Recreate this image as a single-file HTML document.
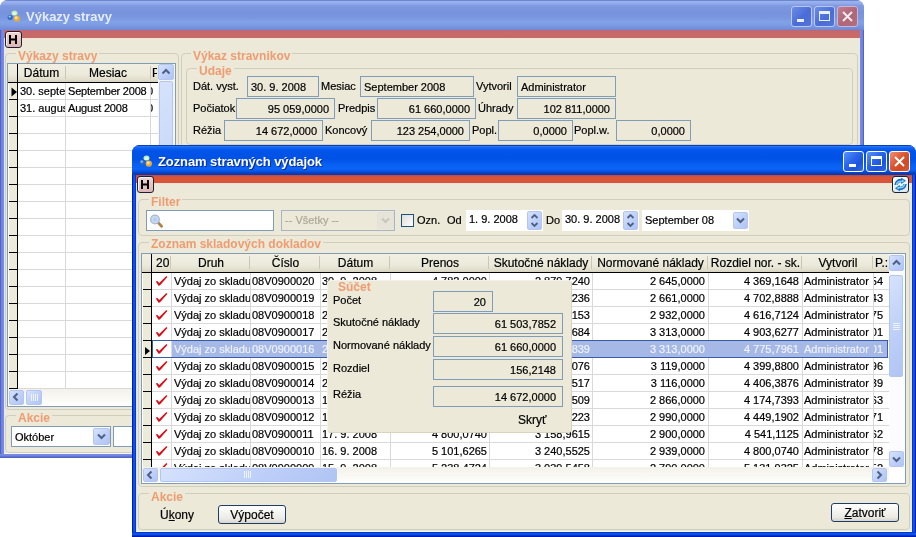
<!DOCTYPE html>
<html><head><meta charset="utf-8">
<style>
*{box-sizing:border-box;margin:0;padding:0}
html,body{width:916px;height:537px;overflow:hidden;background:#fff;font-family:"Liberation Sans",sans-serif;font-size:11px;color:#000}
.a{position:absolute}
.t{font-size:11px;line-height:11px;white-space:nowrap;-webkit-text-stroke:0.2px currentColor}
.gl{font-size:12px;line-height:12px;font-weight:bold;white-space:nowrap;background:#ECE9D8}
.tt{font-size:13px;line-height:13px;font-weight:bold;white-space:nowrap}
.hb{position:absolute;width:17px;height:17px;border:1px solid #2E3040;border-radius:3px;background:linear-gradient(#F0D4D0,#DDB4B0);font-weight:bold;font-size:12px;line-height:15px;text-align:center;color:#000}
.sbb{position:absolute;border:1px solid #B4C6F0;border-radius:2px;background:linear-gradient(135deg,#D6E2FC,#BCCEF8 60%,#B0C4F4)}
.hdr{background:linear-gradient(#F1EFE2 0,#ECEADB 60%,#E2DFCE 85%,#D6D2C2 100%)}
</style></head><body><div style="position:absolute;left:0;top:0;width:916px;height:537px;will-change:transform;overflow:hidden">

<div class="a" style="left:0px;top:0px;width:864px;height:458px;background:#7A8FDB;border-radius:8px 8px 0 0;"></div>
<div class="a" style="left:0px;top:0px;width:864px;height:30px;border-radius:8px 8px 0 0;background:linear-gradient(#6E86D0 0,#6E86D0 1px,#9CB5EE 1px,#94AEEC 3px,#7E98E0 6px,#7892DC 12px,#7A97DF 18px,#80A2E8 22px,#7C9CE4 25px,#7590DA 28px,#6E88D4 30px);"></div>
<svg class="a" style="left:7px;top:10px" width="15" height="13" viewBox="0 0 15 13"><ellipse cx="7.5" cy="3" rx="3" ry="2.6" fill="#B8ECB0"/><ellipse cx="7.5" cy="3.5" rx="2" ry="1.6" fill="#E0FADC"/><circle cx="3.2" cy="7.3" r="2.6" fill="#2F6CC0"/><circle cx="2.8" cy="6.6" r="1.2" fill="#8CC0F0"/><circle cx="9.8" cy="8.6" r="3.2" fill="#E8A838"/><circle cx="9.2" cy="7.8" r="1.6" fill="#FAE0A0"/></svg>
<div class="a tt" style="left:26px;top:10px;color:#E4ECFC">Výkazy stravy</div>
<div class="a" style="left:791px;top:6px;width:21px;height:21px;border:1px solid #B9C8F2;border-radius:3px;background:linear-gradient(135deg,#6C8DE6,#4A6CD8 55%,#5574DA);"></div>
<div class="a" style="left:814px;top:6px;width:21px;height:21px;border:1px solid #B9C8F2;border-radius:3px;background:linear-gradient(135deg,#6C8DE6,#4A6CD8 55%,#5574DA);"></div>
<div class="a" style="left:837px;top:6px;width:21px;height:21px;border:1px solid #C8B6D8;border-radius:3px;background:linear-gradient(135deg,#C27D90,#B06676 55%,#B46E80);"></div>
<div class="a" style="left:797px;top:19px;width:7px;height:3px;background:#E8EEFC;"></div>
<div class="a" style="left:819px;top:11px;width:11px;height:10px;border:1px solid #E8EEFC;border-top-width:3px;"></div>
<svg class="a" style="left:841px;top:10px" width="13" height="13" viewBox="0 0 13 13"><path d="M2 2 L11 11 M11 2 L2 11" stroke="#F4ECF2" stroke-width="2"/></svg>
<div class="a" style="left:4px;top:30px;width:856px;height:424px;background:#ECE9D8;"></div>
<div class="a" style="left:0px;top:30px;width:4px;height:428px;background:linear-gradient(90deg,#5363C8 0,#5363C8 1px,#6C80DE 1px,#7488E2 3px,#7D90E6 4px);"></div>
<div class="a" style="left:860px;top:30px;width:4px;height:428px;background:linear-gradient(90deg,#7D90E6 0,#7488E2 1px,#6C80DE 3px,#5363C8 3px,#5363C8 4px);"></div>
<div class="a" style="left:0px;top:454px;width:864px;height:4px;background:linear-gradient(#7D90E6 0,#7488E2 1px,#6C80DE 2px,#5363C8 3px,#5363C8 4px);"></div>
<div class="a" style="left:4px;top:38px;width:1px;height:416px;background:#E2E6F4;"></div>
<div class="a" style="left:4px;top:453px;width:856px;height:1px;background:#F4F4F8;"></div>
<div class="a" style="left:4px;top:30px;width:856px;height:8px;background:linear-gradient(#B9667A 0,#C86A68 2px,#C66A66 100%);"></div>
<div class="a" style="left:4px;top:38px;width:856px;height:1px;background:#F2E2DA;"></div>
<div class="a" style="left:5px;top:31px;width:17px;height:17px;border:1px solid #1E2030;box-shadow:inset 1px 1px 0 #F8F0F0;border-radius:3px;background:linear-gradient(#EED6D4,#DDB6B4)"></div>
<svg class="a" style="left:5px;top:31px" width="17" height="17" viewBox="0 0 17 17"><path d="M4 4h2v3.5h4V4h2v9h-2V9.5H6V13H4z" fill="#000"/></svg>
<div class="a" style="left:5px;top:53px;width:174px;height:357px;border:1px solid #D0CFBF;border-radius:4px;"></div>
<div class="a gl" style="left:16px;top:50px;padding:0 2px;color:#EE9C72">Výkazy stravy</div>
<div class="a" style="left:7px;top:63px;width:169px;height:344px;border:1px solid #7F9DB9;background:#fff;"></div>
<div class="a" style="left:8px;top:64px;width:150px;height:17px;"></div>
<div class="a hdr" style="left:8px;top:64px;width:150px;height:18px"></div>
<div class="a" style="left:8px;top:82px;width:150px;height:1px;background:#000;"></div>
<div class="a" style="left:9px;top:83px;width:8px;height:306px;background:#ECEBDA;"></div>
<div class="a" style="left:17px;top:64px;width:1px;height:325px;background:#000;"></div>
<div class="a" style="left:65px;top:66px;width:1px;height:13px;background:#CAC7B5;"></div>
<div class="a" style="left:65px;top:83px;width:1px;height:306px;background:#D9D9D9;"></div>
<div class="a" style="left:150px;top:66px;width:1px;height:13px;background:#CAC7B5;"></div>
<div class="a" style="left:150px;top:83px;width:1px;height:306px;background:#D9D9D9;"></div>
<div class="a t" style="left:18px;width:47px;top:67px;text-align:center;font-size:12px;line-height:12px">Dátum</div>
<div class="a t" style="left:66px;width:84px;top:67px;text-align:center;font-size:12px;line-height:12px">Mesiac</div>
<div class="a t" style="left:152px;top:67px;width:5px;overflow:hidden;text-align:left;font-size:12px;line-height:12px">P</div>
<div class="a" style="left:18px;top:99px;width:140px;height:1px;background:#D9D9D9;"></div>
<div class="a" style="left:9px;top:99px;width:9px;height:1px;background:#000;"></div>
<div class="a" style="left:18px;top:116px;width:140px;height:1px;background:#D9D9D9;"></div>
<div class="a" style="left:9px;top:116px;width:9px;height:1px;background:#000;"></div>
<div class="a" style="left:18px;top:133px;width:140px;height:1px;background:#D9D9D9;"></div>
<div class="a" style="left:9px;top:133px;width:9px;height:1px;background:#000;"></div>
<div class="a" style="left:18px;top:150px;width:140px;height:1px;background:#D9D9D9;"></div>
<div class="a" style="left:9px;top:150px;width:9px;height:1px;background:#000;"></div>
<div class="a" style="left:18px;top:167px;width:140px;height:1px;background:#D9D9D9;"></div>
<div class="a" style="left:9px;top:167px;width:9px;height:1px;background:#000;"></div>
<div class="a" style="left:18px;top:184px;width:140px;height:1px;background:#D9D9D9;"></div>
<div class="a" style="left:9px;top:184px;width:9px;height:1px;background:#000;"></div>
<div class="a" style="left:18px;top:201px;width:140px;height:1px;background:#D9D9D9;"></div>
<div class="a" style="left:9px;top:201px;width:9px;height:1px;background:#000;"></div>
<div class="a" style="left:18px;top:218px;width:140px;height:1px;background:#D9D9D9;"></div>
<div class="a" style="left:9px;top:218px;width:9px;height:1px;background:#000;"></div>
<div class="a" style="left:18px;top:235px;width:140px;height:1px;background:#D9D9D9;"></div>
<div class="a" style="left:9px;top:235px;width:9px;height:1px;background:#000;"></div>
<div class="a" style="left:18px;top:252px;width:140px;height:1px;background:#D9D9D9;"></div>
<div class="a" style="left:9px;top:252px;width:9px;height:1px;background:#000;"></div>
<div class="a" style="left:18px;top:269px;width:140px;height:1px;background:#D9D9D9;"></div>
<div class="a" style="left:9px;top:269px;width:9px;height:1px;background:#000;"></div>
<div class="a" style="left:18px;top:286px;width:140px;height:1px;background:#D9D9D9;"></div>
<div class="a" style="left:9px;top:286px;width:9px;height:1px;background:#000;"></div>
<div class="a" style="left:18px;top:303px;width:140px;height:1px;background:#D9D9D9;"></div>
<div class="a" style="left:9px;top:303px;width:9px;height:1px;background:#000;"></div>
<div class="a" style="left:18px;top:320px;width:140px;height:1px;background:#D9D9D9;"></div>
<div class="a" style="left:9px;top:320px;width:9px;height:1px;background:#000;"></div>
<div class="a" style="left:18px;top:337px;width:140px;height:1px;background:#D9D9D9;"></div>
<div class="a" style="left:9px;top:337px;width:9px;height:1px;background:#000;"></div>
<div class="a" style="left:18px;top:354px;width:140px;height:1px;background:#D9D9D9;"></div>
<div class="a" style="left:9px;top:354px;width:9px;height:1px;background:#000;"></div>
<div class="a" style="left:18px;top:371px;width:140px;height:1px;background:#D9D9D9;"></div>
<div class="a" style="left:9px;top:371px;width:9px;height:1px;background:#000;"></div>
<div class="a" style="left:18px;top:388px;width:140px;height:1px;background:#D9D9D9;"></div>
<div class="a" style="left:9px;top:388px;width:9px;height:1px;background:#000;"></div>
<div class="a t" style="left:20px;top:86px;width:45px;overflow:hidden;text-align:left;">30. septembra 2008</div>
<div class="a t" style="left:68px;top:86px;width:82px;overflow:hidden;text-align:left;letter-spacing:-0.2px">September 2008</div>
<div class="a t" style="left:151px;top:86px;width:7px;overflow:hidden"><span style="margin-left:-4px">0</span></div>
<div class="a t" style="left:20px;top:103px;width:45px;overflow:hidden;text-align:left;">31. augusta 2008</div>
<div class="a t" style="left:68px;top:103px;width:82px;overflow:hidden;text-align:left;letter-spacing:-0.2px">August 2008</div>
<div class="a t" style="left:151px;top:103px;width:7px;overflow:hidden"><span style="margin-left:-4px">0</span></div>
<svg class="a" style="left:11px;top:87px" width="6" height="10" viewBox="0 0 6 10"><path d="M0.5 0.5 L6 5 L0.5 9.5 Z" fill="#000"/></svg>
<div class="a" style="left:158px;top:64px;width:17px;height:325px;background:#F6F5EE;"></div>
<div class="sbb" style="left:158px;top:64px;width:16px;height:16px"></div>
<svg class="a" style="left:161px;top:67px" width="10" height="10" viewBox="0 0 10 10"><path d="M1.5 6.5 L5 3 L8.5 6.5" stroke="#4D6185" stroke-width="2" fill="none"/></svg>
<div class="sbb" style="left:159px;top:81px;width:14px;height:300px"></div>
<div class="a" style="left:8px;top:389px;width:150px;height:16px;background:linear-gradient(#F3F1EA,#FEFEFB);"></div>
<div class="sbb" style="left:9px;top:390px;width:15px;height:15px"></div>
<svg class="a" style="left:11px;top:392px" width="10" height="10" viewBox="0 0 10 10"><path d="M6.5 1.5 L3 5 L6.5 8.5" stroke="#4D6185" stroke-width="2" fill="none"/></svg>
<div class="sbb" style="left:26px;top:390px;width:16px;height:15px"></div>
<div class="a" style="left:31px;top:394px;width:1px;height:7px;background:#EEF4FE;"></div>
<div class="a" style="left:33px;top:394px;width:1px;height:7px;background:#EEF4FE;"></div>
<div class="a" style="left:35px;top:394px;width:1px;height:7px;background:#EEF4FE;"></div>
<div class="a" style="left:37px;top:394px;width:1px;height:7px;background:#EEF4FE;"></div>
<div class="a" style="left:5px;top:415px;width:174px;height:38px;border:1px solid #D0CFBF;border-radius:4px;"></div>
<div class="a gl" style="left:16px;top:412px;padding:0 2px;color:#EE9C72">Akcie</div>
<div class="a" style="left:11px;top:426px;width:100px;height:21px;border:1px solid #7F9DB9;background:#fff;"></div>
<div class="a t" style="left:15px;top:432px;">Október</div>
<div class="sbb" style="left:93px;top:428px;width:17px;height:17px"></div>
<svg class="a" style="left:96px;top:431px" width="11" height="11" viewBox="0 0 11 11"><path d="M2 3.5 L5.5 7 L9 3.5" stroke="#4D6185" stroke-width="2" fill="none"/></svg>
<div class="a" style="left:113px;top:426px;width:30px;height:21px;border:1px solid #7F9DB9;background:#fff;"></div>
<div class="a" style="left:181px;top:53px;width:677px;height:96px;border:1px solid #D0CFBF;border-radius:4px;"></div>
<div class="a gl" style="left:191px;top:50px;padding:0 2px;color:#EE9C72">Výkaz stravnikov</div>
<div class="a" style="left:186px;top:68px;width:667px;height:77px;border:1px solid #D0CFBF;border-radius:4px;"></div>
<div class="a gl" style="left:197px;top:65px;padding:0 2px;color:#EE9C72">Udaje</div>
<div class="a t" style="left:193px;top:81px;">Dát. vyst.</div>
<div class="a" style="left:247px;top:76px;width:72px;height:21px;border:1px solid #7F9DB9;background:#ECE9D8;"></div>
<div class="a t" style="left:251px;top:82px;">30. 9. 2008</div>
<div class="a t" style="left:321px;top:81px;">Mesiac</div>
<div class="a" style="left:360px;top:76px;width:114px;height:21px;border:1px solid #7F9DB9;background:#ECE9D8;"></div>
<div class="a t" style="left:364px;top:82px;">September 2008</div>
<div class="a t" style="left:476px;top:81px;">Vytvoril</div>
<div class="a" style="left:517px;top:76px;width:99px;height:21px;border:1px solid #7F9DB9;background:#ECE9D8;"></div>
<div class="a t" style="left:521px;top:82px;">Administrator</div>
<div class="a t" style="left:193px;top:103px;">Počiatok</div>
<div class="a" style="left:236px;top:98px;width:99px;height:21px;border:1px solid #7F9DB9;background:#ECE9D8;"></div>
<div class="a t" style="right:587px;top:104px;text-align:right;">95 059,0000</div>
<div class="a t" style="left:338px;top:103px;">Predpis</div>
<div class="a" style="left:377px;top:98px;width:99px;height:21px;border:1px solid #7F9DB9;background:#ECE9D8;"></div>
<div class="a t" style="right:446px;top:104px;text-align:right;">61 660,0000</div>
<div class="a t" style="left:478px;top:103px;">Úhrady</div>
<div class="a" style="left:517px;top:98px;width:99px;height:21px;border:1px solid #7F9DB9;background:#ECE9D8;"></div>
<div class="a t" style="right:306px;top:104px;text-align:right;">102 811,0000</div>
<div class="a t" style="left:193px;top:125px;">Réžia</div>
<div class="a" style="left:224px;top:120px;width:99px;height:21px;border:1px solid #7F9DB9;background:#ECE9D8;"></div>
<div class="a t" style="right:599px;top:126px;text-align:right;">14 672,0000</div>
<div class="a t" style="left:325px;top:125px;">Koncový</div>
<div class="a" style="left:371px;top:120px;width:99px;height:21px;border:1px solid #7F9DB9;background:#ECE9D8;"></div>
<div class="a t" style="right:452px;top:126px;text-align:right;">123 254,0000</div>
<div class="a t" style="left:472px;top:125px;">Popl.</div>
<div class="a" style="left:498px;top:120px;width:75px;height:21px;border:1px solid #7F9DB9;background:#ECE9D8;"></div>
<div class="a t" style="right:349px;top:126px;text-align:right;">0,0000</div>
<div class="a t" style="left:574px;top:125px;">Popl.w.</div>
<div class="a" style="left:616px;top:120px;width:75px;height:21px;border:1px solid #7F9DB9;background:#ECE9D8;"></div>
<div class="a t" style="right:231px;top:126px;text-align:right;">0,0000</div>
<div class="a" style="left:132px;top:145px;width:784px;height:392px;background:#0831D9;border-radius:8px 8px 0 0;"></div>
<div class="a" style="left:132px;top:145px;width:784px;height:30px;border-radius:8px 8px 0 0;background:linear-gradient(#0A3FB8 0,#0A3FB8 1px,#2E7BFA 1px,#0E62F2 3px,#0254E8 6px,#0052E6 14px,#0860F2 20px,#0A64F6 24px,#0556E8 26px,#0640C0 28px,#0A38A8 30px);"></div>
<svg class="a" style="left:139px;top:155px" width="15" height="13" viewBox="0 0 15 13"><ellipse cx="7.5" cy="3" rx="3" ry="2.6" fill="#B8ECB0"/><ellipse cx="7.5" cy="3.5" rx="2" ry="1.6" fill="#E0FADC"/><circle cx="3.2" cy="7.3" r="2.6" fill="#2F6CC0"/><circle cx="2.8" cy="6.6" r="1.2" fill="#8CC0F0"/><circle cx="9.8" cy="8.6" r="3.2" fill="#E8A838"/><circle cx="9.2" cy="7.8" r="1.6" fill="#FAE0A0"/></svg>
<div class="a tt" style="left:158px;top:155px;color:#fff;text-shadow:1px 1px 0 #0A2A9A;letter-spacing:-0.09px">Zoznam stravných výdajok</div>
<div class="a" style="left:843px;top:151px;width:21px;height:21px;border:1px solid #FFFFFF;border-radius:3px;background:linear-gradient(135deg,#5A92FA,#2863E8 45%,#1B55DE 70%,#2F6AE8);"></div>
<div class="a" style="left:866px;top:151px;width:21px;height:21px;border:1px solid #FFFFFF;border-radius:3px;background:linear-gradient(135deg,#5A92FA,#2863E8 45%,#1B55DE 70%,#2F6AE8);"></div>
<div class="a" style="left:889px;top:151px;width:21px;height:21px;border:1px solid #FFFFFF;border-radius:3px;background:linear-gradient(135deg,#F09070,#DD5530 45%,#D04A25 70%,#D85A38);"></div>
<div class="a" style="left:849px;top:164px;width:7px;height:3px;background:#FFFFFF;"></div>
<div class="a" style="left:871px;top:156px;width:11px;height:10px;border:1px solid #FFFFFF;border-top-width:3px;"></div>
<svg class="a" style="left:893px;top:155px" width="13" height="13" viewBox="0 0 13 13"><path d="M2 2 L11 11 M11 2 L2 11" stroke="#FFFFFF" stroke-width="2"/></svg>
<div class="a" style="left:136px;top:175px;width:776px;height:357px;background:#ECE9D8;"></div>
<div class="a" style="left:132px;top:175px;width:4px;height:362px;background:linear-gradient(90deg,#001CAC 0,#001CAC 1px,#0A4CE8 1px,#0B58F2 3px,#0538CC 3px,#0538CC 4px);"></div>
<div class="a" style="left:912px;top:175px;width:4px;height:362px;background:linear-gradient(90deg,#0538CC 0,#0538CC 1px,#0B58F2 1px,#0A4CE8 3px,#001CAC 3px,#001CAC 4px);"></div>
<div class="a" style="left:132px;top:532px;width:784px;height:5px;background:linear-gradient(#0538CC 0,#0538CC 1px,#0B58F2 1px,#0A4CE8 3px,#001CAC 4px,#001CAC 5px);"></div>
<div class="a" style="left:136px;top:183px;width:1px;height:349px;background:#D8E2F6;"></div>
<div class="a" style="left:136px;top:531px;width:776px;height:1px;background:#F4F6FA;"></div>
<div class="a" style="left:136px;top:175px;width:776px;height:8px;background:linear-gradient(#B84A48 0,#D9553A 2px,#D9553A 100%);"></div>
<div class="a" style="left:136px;top:183px;width:776px;height:1px;background:#F4E0D4;"></div>
<div class="a" style="left:137px;top:176px;width:17px;height:17px;border:1px solid #1E2030;box-shadow:inset 1px 1px 0 #F8F0F0;border-radius:3px;background:linear-gradient(#EED6D4,#DDB6B4)"></div>
<svg class="a" style="left:137px;top:176px" width="17" height="17" viewBox="0 0 17 17"><path d="M4 4h2v3.5h4V4h2v9h-2V9.5H6V13H4z" fill="#000"/></svg>
<div class="a" style="left:892px;top:176px;width:17px;height:17px;border:1px solid #1A2238;border-radius:3px;background:linear-gradient(#F4FAFE,#DCEAF4);box-shadow:inset 1px 1px 0 #fff"></div>
<svg class="a" style="left:892px;top:176px" width="17" height="17" viewBox="0 0 17 17"><path d="M4 9 C4.2 6 6.5 4.3 10 4.6" stroke="#1E6AB8" stroke-width="3.4" fill="none"/><path d="M9.2 1.8 L14 4.8 L9.2 8 Z" fill="#1E6AB8"/><path d="M13 8 C12.8 11 10.5 12.7 7 12.4" stroke="#1E6AB8" stroke-width="3.4" fill="none"/><path d="M7.8 9 L3 12.2 L7.8 15.2 Z" fill="#1E6AB8"/><path d="M4.5 9 C4.7 6.5 6.8 5 10 5.2" stroke="#7AD0F6" stroke-width="1.6" fill="none"/><path d="M10 3.6 L12.6 4.9 L10 6.5 Z" fill="#7AD0F6"/><path d="M12.5 8 C12.3 10.5 10.2 12 7 11.8" stroke="#7AD0F6" stroke-width="1.6" fill="none"/><path d="M7 10.5 L4.4 12.1 L7 13.5 Z" fill="#7AD0F6"/></svg>
<div class="a" style="left:138px;top:199px;width:772px;height:37px;border:1px solid #D0CFBF;border-radius:4px;"></div>
<div class="a gl" style="left:149px;top:196px;padding:0 2px;color:#EE9C72">Filter</div>
<div class="a" style="left:146px;top:210px;width:128px;height:21px;border:1px solid #7F9DB9;background:#fff;"></div>
<svg class="a" style="left:149px;top:213px" width="16" height="16" viewBox="0 0 16 16"><path d="M9.2 9.6 L12.6 13.2" stroke="#B0804A" stroke-width="2.8" stroke-linecap="round"/><circle cx="6" cy="6.5" r="4.3" fill="#C8DAF2" stroke="#A4B6D2" stroke-width="1.3"/><circle cx="6" cy="6.5" r="2" fill="#B8CCEA"/></svg>
<div class="a" style="left:281px;top:210px;width:114px;height:21px;border:1px solid #C9C7BA;background:#ECE9D8;"></div>
<div class="a" style="left:281px;top:210px;width:114px;height:21px;border:1px solid #A8B4C4;"></div>
<div class="a t" style="left:285px;top:215px;color:#ACA899">-- Všetky --</div>
<div class="a" style="left:377px;top:212px;width:17px;height:17px;border:1px solid #E4E2D8;border-radius:2px;background:#E6E4D8;"></div>
<svg class="a" style="left:380px;top:215px" width="11" height="11" viewBox="0 0 11 11"><path d="M2 3.5 L5.5 7 L9 3.5" stroke="#C8C6BA" stroke-width="2" fill="none"/></svg>
<div class="a" style="left:401px;top:214px;width:13px;height:13px;border:1px solid #1C5180;background:linear-gradient(135deg,#DCDCD7,#FFFFFF);"></div>
<div class="a t" style="left:417px;top:215px;">Ozn.</div>
<div class="a t" style="left:447px;top:215px;">Od</div>
<div class="a" style="left:466px;top:210px;width:77px;height:21px;background:#fff;"></div>
<div class="a t" style="left:469px;top:214px;">1. 9. 2008</div>
<div class="sbb" style="left:527px;top:211px;width:15px;height:19px"></div>
<svg class="a" style="left:529px;top:212px" width="11" height="17" viewBox="0 0 11 17"><path d="M2.5 6 L5.5 3 L8.5 6 M2.5 11 L5.5 14 L8.5 11" stroke="#4D6185" stroke-width="1.8" fill="none"/></svg>
<div class="a t" style="left:546px;top:215px;">Do</div>
<div class="a" style="left:562px;top:210px;width:77px;height:21px;background:#fff;"></div>
<div class="a t" style="left:565px;top:214px;">30. 9. 2008</div>
<div class="sbb" style="left:623px;top:211px;width:15px;height:19px"></div>
<svg class="a" style="left:625px;top:212px" width="11" height="17" viewBox="0 0 11 17"><path d="M2.5 6 L5.5 3 L8.5 6 M2.5 11 L5.5 14 L8.5 11" stroke="#4D6185" stroke-width="1.8" fill="none"/></svg>
<div class="a" style="left:642px;top:210px;width:107px;height:21px;background:#fff;"></div>
<div class="a t" style="left:645px;top:215px;">September 08</div>
<div class="sbb" style="left:733px;top:212px;width:15px;height:17px"></div>
<svg class="a" style="left:735px;top:215px" width="11" height="11" viewBox="0 0 11 11"><path d="M2 3.5 L5.5 7 L9 3.5" stroke="#4D6185" stroke-width="2" fill="none"/></svg>
<div class="a" style="left:138px;top:242px;width:772px;height:245px;border:1px solid #D0CFBF;border-radius:4px;"></div>
<div class="a gl" style="left:149px;top:238px;padding:0 2px;color:#EE9C72">Zoznam skladových dokladov</div>
<div class="a" style="left:141px;top:253px;width:765px;height:231px;border:1px solid #7F9DB9;background:#fff;"></div>
<div class="a hdr" style="left:142px;top:254px;width:747px;height:18px"></div>
<div class="a" style="left:142px;top:272px;width:747px;height:1px;background:#000;"></div>
<div class="a" style="left:143px;top:273px;width:8px;height:194px;background:#ECEBDA;"></div>
<div class="a" style="left:151px;top:254px;width:1px;height:213px;background:#000;"></div>
<div class="a" style="left:170px;top:256px;width:1px;height:13px;background:#CAC7B5;"></div>
<div class="a" style="left:171px;top:273px;width:1px;height:194px;background:#D9D9D9;"></div>
<div class="a" style="left:249px;top:256px;width:1px;height:13px;background:#CAC7B5;"></div>
<div class="a" style="left:250px;top:273px;width:1px;height:194px;background:#D9D9D9;"></div>
<div class="a" style="left:319px;top:256px;width:1px;height:13px;background:#CAC7B5;"></div>
<div class="a" style="left:320px;top:273px;width:1px;height:194px;background:#D9D9D9;"></div>
<div class="a" style="left:389px;top:256px;width:1px;height:13px;background:#CAC7B5;"></div>
<div class="a" style="left:390px;top:273px;width:1px;height:194px;background:#D9D9D9;"></div>
<div class="a" style="left:488px;top:256px;width:1px;height:13px;background:#CAC7B5;"></div>
<div class="a" style="left:489px;top:273px;width:1px;height:194px;background:#D9D9D9;"></div>
<div class="a" style="left:591px;top:256px;width:1px;height:13px;background:#CAC7B5;"></div>
<div class="a" style="left:592px;top:273px;width:1px;height:194px;background:#D9D9D9;"></div>
<div class="a" style="left:707px;top:256px;width:1px;height:13px;background:#CAC7B5;"></div>
<div class="a" style="left:708px;top:273px;width:1px;height:194px;background:#D9D9D9;"></div>
<div class="a" style="left:801px;top:256px;width:1px;height:13px;background:#CAC7B5;"></div>
<div class="a" style="left:802px;top:273px;width:1px;height:194px;background:#D9D9D9;"></div>
<div class="a" style="left:872px;top:256px;width:1px;height:13px;background:#CAC7B5;"></div>
<div class="a" style="left:873px;top:273px;width:1px;height:194px;background:#D9D9D9;"></div>
<div class="a t" style="left:156px;top:257px;font-size:12px;line-height:12px">20</div>
<div class="a t" style="left:172px;width:78px;top:257px;text-align:center;font-size:12px;line-height:12px">Druh</div>
<div class="a t" style="left:251px;width:69px;top:257px;text-align:center;font-size:12px;line-height:12px">Číslo</div>
<div class="a t" style="left:321px;width:69px;top:257px;text-align:center;font-size:12px;line-height:12px">Dátum</div>
<div class="a t" style="left:391px;width:98px;top:257px;text-align:center;font-size:12px;line-height:12px">Prenos</div>
<div class="a t" style="left:490px;width:102px;top:257px;text-align:center;font-size:12px;line-height:12px">Skutočné náklady</div>
<div class="a t" style="left:593px;width:115px;top:257px;text-align:center;font-size:12px;line-height:12px">Normované náklady</div>
<div class="a t" style="left:709px;width:93px;top:257px;text-align:center;font-size:12px;line-height:12px">Rozdiel nor. - sk.</div>
<div class="a t" style="left:803px;width:70px;top:257px;text-align:center;font-size:12px;line-height:12px">Vytvoril</div>
<div class="a t" style="left:875px;top:257px;width:13px;overflow:hidden;text-align:left;font-size:12px;line-height:12px">P.:</div>
<div class="a" style="left:152px;top:289px;width:737px;height:1px;background:#D9D9D9;"></div>
<div class="a" style="left:143px;top:289px;width:9px;height:1px;background:#000;"></div>
<div class="a" style="left:152px;top:306px;width:737px;height:1px;background:#D9D9D9;"></div>
<div class="a" style="left:143px;top:306px;width:9px;height:1px;background:#000;"></div>
<div class="a" style="left:152px;top:323px;width:737px;height:1px;background:#D9D9D9;"></div>
<div class="a" style="left:143px;top:323px;width:9px;height:1px;background:#000;"></div>
<div class="a" style="left:152px;top:340px;width:737px;height:1px;background:#D9D9D9;"></div>
<div class="a" style="left:143px;top:340px;width:9px;height:1px;background:#000;"></div>
<div class="a" style="left:152px;top:357px;width:737px;height:1px;background:#D9D9D9;"></div>
<div class="a" style="left:143px;top:357px;width:9px;height:1px;background:#000;"></div>
<div class="a" style="left:152px;top:374px;width:737px;height:1px;background:#D9D9D9;"></div>
<div class="a" style="left:143px;top:374px;width:9px;height:1px;background:#000;"></div>
<div class="a" style="left:152px;top:391px;width:737px;height:1px;background:#D9D9D9;"></div>
<div class="a" style="left:143px;top:391px;width:9px;height:1px;background:#000;"></div>
<div class="a" style="left:152px;top:408px;width:737px;height:1px;background:#D9D9D9;"></div>
<div class="a" style="left:143px;top:408px;width:9px;height:1px;background:#000;"></div>
<div class="a" style="left:152px;top:425px;width:737px;height:1px;background:#D9D9D9;"></div>
<div class="a" style="left:143px;top:425px;width:9px;height:1px;background:#000;"></div>
<div class="a" style="left:152px;top:442px;width:737px;height:1px;background:#D9D9D9;"></div>
<div class="a" style="left:143px;top:442px;width:9px;height:1px;background:#000;"></div>
<div class="a" style="left:152px;top:459px;width:737px;height:1px;background:#D9D9D9;"></div>
<div class="a" style="left:143px;top:459px;width:9px;height:1px;background:#000;"></div>
<div class="a" style="left:172px;top:340px;width:716px;height:17px;background:#A6B8E6;"></div>
<div class="a" style="left:152px;top:340px;width:736px;height:18px;border:1px solid #3A5CA8;"></div>
<div class="a" style="left:142px;top:467px;width:747px;height:0"></div>
<svg class="a" style="left:155px;top:276px" width="13" height="11" viewBox="0 0 13 11"><path d="M0.8 5.6 L2.4 5 L4.2 6.9 L11.4 0 L12.4 0.9 L4.9 9.6 L3.5 9.8 Z" fill="#D8101A"/></svg>
<div class="a t" style="left:174px;top:276px;width:76px;overflow:hidden;text-align:left;">Výdaj zo skladu</div>
<div class="a t" style="left:252px;top:276px;width:68px;overflow:hidden;text-align:left;">08V0900020</div>
<div class="a t" style="left:322px;top:276px;width:68px;overflow:hidden;text-align:left;">30. 9. 2008</div>
<div class="a t" style="right:429px;top:276px;text-align:right;">4 782,0000</div>
<div class="a t" style="right:326px;top:276px;text-align:right;">2 879,7240</div>
<div class="a t" style="right:211px;top:276px;text-align:right;">2 645,0000</div>
<div class="a t" style="right:117px;top:276px;text-align:right;">4 369,1648</div>
<div class="a t" style="left:804px;top:276px;width:69px;overflow:hidden;text-align:left;">Administrator</div>
<div class="a t" style="left:874px;top:276px;width:14px;height:12px;overflow:hidden;"><span style="position:absolute;right:5px;top:0">054</span></div>
<svg class="a" style="left:155px;top:293px" width="13" height="11" viewBox="0 0 13 11"><path d="M0.8 5.6 L2.4 5 L4.2 6.9 L11.4 0 L12.4 0.9 L4.9 9.6 L3.5 9.8 Z" fill="#D8101A"/></svg>
<div class="a t" style="left:174px;top:293px;width:76px;overflow:hidden;text-align:left;">Výdaj zo skladu</div>
<div class="a t" style="left:252px;top:293px;width:68px;overflow:hidden;text-align:left;">08V0900019</div>
<div class="a t" style="left:322px;top:293px;width:68px;overflow:hidden;text-align:left;">29. 9. 2008</div>
<div class="a t" style="right:429px;top:293px;text-align:right;">4 745,6236</div>
<div class="a t" style="right:326px;top:293px;text-align:right;">3 050,4236</div>
<div class="a t" style="right:211px;top:293px;text-align:right;">2 661,0000</div>
<div class="a t" style="right:117px;top:293px;text-align:right;">4 702,8888</div>
<div class="a t" style="left:804px;top:293px;width:69px;overflow:hidden;text-align:left;">Administrator</div>
<div class="a t" style="left:874px;top:293px;width:14px;height:12px;overflow:hidden;"><span style="position:absolute;right:5px;top:0">043</span></div>
<svg class="a" style="left:155px;top:310px" width="13" height="11" viewBox="0 0 13 11"><path d="M0.8 5.6 L2.4 5 L4.2 6.9 L11.4 0 L12.4 0.9 L4.9 9.6 L3.5 9.8 Z" fill="#D8101A"/></svg>
<div class="a t" style="left:174px;top:310px;width:76px;overflow:hidden;text-align:left;">Výdaj zo skladu</div>
<div class="a t" style="left:252px;top:310px;width:68px;overflow:hidden;text-align:left;">08V0900018</div>
<div class="a t" style="left:322px;top:310px;width:68px;overflow:hidden;text-align:left;">26. 9. 2008</div>
<div class="a t" style="right:429px;top:310px;text-align:right;">4 852,1153</div>
<div class="a t" style="right:326px;top:310px;text-align:right;">3 018,1153</div>
<div class="a t" style="right:211px;top:310px;text-align:right;">2 932,0000</div>
<div class="a t" style="right:117px;top:310px;text-align:right;">4 616,7124</div>
<div class="a t" style="left:804px;top:310px;width:69px;overflow:hidden;text-align:left;">Administrator</div>
<div class="a t" style="left:874px;top:310px;width:14px;height:12px;overflow:hidden;"><span style="position:absolute;right:5px;top:0">075</span></div>
<svg class="a" style="left:155px;top:327px" width="13" height="11" viewBox="0 0 13 11"><path d="M0.8 5.6 L2.4 5 L4.2 6.9 L11.4 0 L12.4 0.9 L4.9 9.6 L3.5 9.8 Z" fill="#D8101A"/></svg>
<div class="a t" style="left:174px;top:327px;width:76px;overflow:hidden;text-align:left;">Výdaj zo skladu</div>
<div class="a t" style="left:252px;top:327px;width:68px;overflow:hidden;text-align:left;">08V0900017</div>
<div class="a t" style="left:322px;top:327px;width:68px;overflow:hidden;text-align:left;">25. 9. 2008</div>
<div class="a t" style="right:429px;top:327px;text-align:right;">4 736,2684</div>
<div class="a t" style="right:326px;top:327px;text-align:right;">3 145,2684</div>
<div class="a t" style="right:211px;top:327px;text-align:right;">3 313,0000</div>
<div class="a t" style="right:117px;top:327px;text-align:right;">4 903,6277</div>
<div class="a t" style="left:804px;top:327px;width:69px;overflow:hidden;text-align:left;">Administrator</div>
<div class="a t" style="left:874px;top:327px;width:14px;height:12px;overflow:hidden;"><span style="position:absolute;right:5px;top:0">001</span></div>
<svg class="a" style="left:155px;top:344px" width="13" height="11" viewBox="0 0 13 11"><path d="M0.8 5.6 L2.4 5 L4.2 6.9 L11.4 0 L12.4 0.9 L4.9 9.6 L3.5 9.8 Z" fill="#D8101A"/></svg>
<div class="a t" style="left:174px;top:344px;width:76px;overflow:hidden;text-align:left;color:#EEF2FA;">Výdaj zo skladu</div>
<div class="a t" style="left:252px;top:344px;width:68px;overflow:hidden;text-align:left;color:#EEF2FA;">08V0900016</div>
<div class="a t" style="left:322px;top:344px;width:68px;overflow:hidden;text-align:left;color:#EEF2FA;">24. 9. 2008</div>
<div class="a t" style="right:429px;top:344px;text-align:right;color:#EEF2FA;">4 841,3839</div>
<div class="a t" style="right:326px;top:344px;text-align:right;color:#EEF2FA;">3 378,3839</div>
<div class="a t" style="right:211px;top:344px;text-align:right;color:#EEF2FA;">3 313,0000</div>
<div class="a t" style="right:117px;top:344px;text-align:right;color:#EEF2FA;">4 775,7961</div>
<div class="a t" style="left:804px;top:344px;width:69px;overflow:hidden;text-align:left;color:#EEF2FA;">Administrator</div>
<div class="a t" style="left:874px;top:344px;width:14px;height:12px;overflow:hidden;color:#EEF2FA;"><span style="position:absolute;right:5px;top:0">001</span></div>
<svg class="a" style="left:155px;top:361px" width="13" height="11" viewBox="0 0 13 11"><path d="M0.8 5.6 L2.4 5 L4.2 6.9 L11.4 0 L12.4 0.9 L4.9 9.6 L3.5 9.8 Z" fill="#D8101A"/></svg>
<div class="a t" style="left:174px;top:361px;width:76px;overflow:hidden;text-align:left;">Výdaj zo skladu</div>
<div class="a t" style="left:252px;top:361px;width:68px;overflow:hidden;text-align:left;">08V0900015</div>
<div class="a t" style="left:322px;top:361px;width:68px;overflow:hidden;text-align:left;">23. 9. 2008</div>
<div class="a t" style="right:429px;top:361px;text-align:right;">4 660,2076</div>
<div class="a t" style="right:326px;top:361px;text-align:right;">3 080,2076</div>
<div class="a t" style="right:211px;top:361px;text-align:right;">3 119,0000</div>
<div class="a t" style="right:117px;top:361px;text-align:right;">4 399,8800</div>
<div class="a t" style="left:804px;top:361px;width:69px;overflow:hidden;text-align:left;">Administrator</div>
<div class="a t" style="left:874px;top:361px;width:14px;height:12px;overflow:hidden;"><span style="position:absolute;right:5px;top:0">096</span></div>
<svg class="a" style="left:155px;top:378px" width="13" height="11" viewBox="0 0 13 11"><path d="M0.8 5.6 L2.4 5 L4.2 6.9 L11.4 0 L12.4 0.9 L4.9 9.6 L3.5 9.8 Z" fill="#D8101A"/></svg>
<div class="a t" style="left:174px;top:378px;width:76px;overflow:hidden;text-align:left;">Výdaj zo skladu</div>
<div class="a t" style="left:252px;top:378px;width:68px;overflow:hidden;text-align:left;">08V0900014</div>
<div class="a t" style="left:322px;top:378px;width:68px;overflow:hidden;text-align:left;">22. 9. 2008</div>
<div class="a t" style="right:429px;top:378px;text-align:right;">4 792,8517</div>
<div class="a t" style="right:326px;top:378px;text-align:right;">3 116,8517</div>
<div class="a t" style="right:211px;top:378px;text-align:right;">3 116,0000</div>
<div class="a t" style="right:117px;top:378px;text-align:right;">4 406,3876</div>
<div class="a t" style="left:804px;top:378px;width:69px;overflow:hidden;text-align:left;">Administrator</div>
<div class="a t" style="left:874px;top:378px;width:14px;height:12px;overflow:hidden;"><span style="position:absolute;right:5px;top:0">039</span></div>
<svg class="a" style="left:155px;top:395px" width="13" height="11" viewBox="0 0 13 11"><path d="M0.8 5.6 L2.4 5 L4.2 6.9 L11.4 0 L12.4 0.9 L4.9 9.6 L3.5 9.8 Z" fill="#D8101A"/></svg>
<div class="a t" style="left:174px;top:395px;width:76px;overflow:hidden;text-align:left;">Výdaj zo skladu</div>
<div class="a t" style="left:252px;top:395px;width:68px;overflow:hidden;text-align:left;">08V0900013</div>
<div class="a t" style="left:322px;top:395px;width:68px;overflow:hidden;text-align:left;">19. 9. 2008</div>
<div class="a t" style="right:429px;top:395px;text-align:right;">4 632,1509</div>
<div class="a t" style="right:326px;top:395px;text-align:right;">2 990,1509</div>
<div class="a t" style="right:211px;top:395px;text-align:right;">2 866,0000</div>
<div class="a t" style="right:117px;top:395px;text-align:right;">4 174,7393</div>
<div class="a t" style="left:804px;top:395px;width:69px;overflow:hidden;text-align:left;">Administrator</div>
<div class="a t" style="left:874px;top:395px;width:14px;height:12px;overflow:hidden;"><span style="position:absolute;right:5px;top:0">063</span></div>
<svg class="a" style="left:155px;top:412px" width="13" height="11" viewBox="0 0 13 11"><path d="M0.8 5.6 L2.4 5 L4.2 6.9 L11.4 0 L12.4 0.9 L4.9 9.6 L3.5 9.8 Z" fill="#D8101A"/></svg>
<div class="a t" style="left:174px;top:412px;width:76px;overflow:hidden;text-align:left;">Výdaj zo skladu</div>
<div class="a t" style="left:252px;top:412px;width:68px;overflow:hidden;text-align:left;">08V0900012</div>
<div class="a t" style="left:322px;top:412px;width:68px;overflow:hidden;text-align:left;">18. 9. 2008</div>
<div class="a t" style="right:429px;top:412px;text-align:right;">4 851,0223</div>
<div class="a t" style="right:326px;top:412px;text-align:right;">3 039,0223</div>
<div class="a t" style="right:211px;top:412px;text-align:right;">2 990,0000</div>
<div class="a t" style="right:117px;top:412px;text-align:right;">4 449,1902</div>
<div class="a t" style="left:804px;top:412px;width:69px;overflow:hidden;text-align:left;">Administrator</div>
<div class="a t" style="left:874px;top:412px;width:14px;height:12px;overflow:hidden;"><span style="position:absolute;right:5px;top:0">071</span></div>
<svg class="a" style="left:155px;top:429px" width="13" height="11" viewBox="0 0 13 11"><path d="M0.8 5.6 L2.4 5 L4.2 6.9 L11.4 0 L12.4 0.9 L4.9 9.6 L3.5 9.8 Z" fill="#D8101A"/></svg>
<div class="a t" style="left:174px;top:429px;width:76px;overflow:hidden;text-align:left;">Výdaj zo skladu</div>
<div class="a t" style="left:252px;top:429px;width:68px;overflow:hidden;text-align:left;">08V0900011</div>
<div class="a t" style="left:322px;top:429px;width:68px;overflow:hidden;text-align:left;">17. 9. 2008</div>
<div class="a t" style="right:429px;top:429px;text-align:right;">4 800,0740</div>
<div class="a t" style="right:326px;top:429px;text-align:right;">3 158,9615</div>
<div class="a t" style="right:211px;top:429px;text-align:right;">2 900,0000</div>
<div class="a t" style="right:117px;top:429px;text-align:right;">4 541,1125</div>
<div class="a t" style="left:804px;top:429px;width:69px;overflow:hidden;text-align:left;">Administrator</div>
<div class="a t" style="left:874px;top:429px;width:14px;height:12px;overflow:hidden;"><span style="position:absolute;right:5px;top:0">062</span></div>
<svg class="a" style="left:155px;top:446px" width="13" height="11" viewBox="0 0 13 11"><path d="M0.8 5.6 L2.4 5 L4.2 6.9 L11.4 0 L12.4 0.9 L4.9 9.6 L3.5 9.8 Z" fill="#D8101A"/></svg>
<div class="a t" style="left:174px;top:446px;width:76px;overflow:hidden;text-align:left;">Výdaj zo skladu</div>
<div class="a t" style="left:252px;top:446px;width:68px;overflow:hidden;text-align:left;">08V0900010</div>
<div class="a t" style="left:322px;top:446px;width:68px;overflow:hidden;text-align:left;">16. 9. 2008</div>
<div class="a t" style="right:429px;top:446px;text-align:right;">5 101,6265</div>
<div class="a t" style="right:326px;top:446px;text-align:right;">3 240,5525</div>
<div class="a t" style="right:211px;top:446px;text-align:right;">2 939,0000</div>
<div class="a t" style="right:117px;top:446px;text-align:right;">4 800,0740</div>
<div class="a t" style="left:804px;top:446px;width:69px;overflow:hidden;text-align:left;">Administrator</div>
<div class="a t" style="left:874px;top:446px;width:14px;height:12px;overflow:hidden;"><span style="position:absolute;right:5px;top:0">078</span></div>
<svg class="a" style="left:155px;top:463px" width="13" height="11" viewBox="0 0 13 11"><path d="M0.8 5.6 L2.4 5 L4.2 6.9 L11.4 0 L12.4 0.9 L4.9 9.6 L3.5 9.8 Z" fill="#D8101A"/></svg>
<div class="a t" style="left:174px;top:463px;width:76px;overflow:hidden;text-align:left;">Výdaj zo skladu</div>
<div class="a t" style="left:252px;top:463px;width:68px;overflow:hidden;text-align:left;">08V0900009</div>
<div class="a t" style="left:322px;top:463px;width:68px;overflow:hidden;text-align:left;">15. 9. 2008</div>
<div class="a t" style="right:429px;top:463px;text-align:right;">5 238,4724</div>
<div class="a t" style="right:326px;top:463px;text-align:right;">3 039,5458</div>
<div class="a t" style="right:211px;top:463px;text-align:right;">2 790,0000</div>
<div class="a t" style="right:117px;top:463px;text-align:right;">5 131,9325</div>
<div class="a t" style="left:804px;top:463px;width:69px;overflow:hidden;text-align:left;">Administrator</div>
<div class="a t" style="left:874px;top:463px;width:14px;height:12px;overflow:hidden;"><span style="position:absolute;right:5px;top:0">052</span></div>
<svg class="a" style="left:145px;top:347px" width="6" height="8" viewBox="0 0 6 8"><path d="M0 0 L5 4 L0 8 Z" fill="#000"/></svg>
<div class="a" style="left:889px;top:254px;width:16px;height:229px;background:#FCFCFE;"></div>
<div class="sbb" style="left:889px;top:255px;width:15px;height:16px"></div>
<svg class="a" style="left:891px;top:258px" width="11" height="10" viewBox="0 0 11 10"><path d="M2 6.5 L5.5 3 L9 6.5" stroke="#4D6185" stroke-width="2" fill="none"/></svg>
<div class="sbb" style="left:889px;top:275px;width:14px;height:102px"></div>
<div class="a" style="left:893px;top:323px;width:7px;height:1px;background:#EEF4FE;"></div>
<div class="a" style="left:893px;top:325px;width:7px;height:1px;background:#EEF4FE;"></div>
<div class="a" style="left:893px;top:327px;width:7px;height:1px;background:#EEF4FE;"></div>
<div class="a" style="left:893px;top:329px;width:7px;height:1px;background:#EEF4FE;"></div>
<div class="sbb" style="left:889px;top:451px;width:15px;height:16px"></div>
<svg class="a" style="left:891px;top:454px" width="11" height="10" viewBox="0 0 11 10"><path d="M2 3.5 L5.5 7 L9 3.5" stroke="#4D6185" stroke-width="2" fill="none"/></svg>
<div class="a" style="left:142px;top:467px;width:747px;height:16px;background:linear-gradient(#F3F1EA,#FEFEFB);"></div>
<div class="a" style="left:889px;top:467px;width:16px;height:16px;background:#fff;"></div>
<div class="sbb" style="left:143px;top:468px;width:15px;height:14px"></div>
<svg class="a" style="left:145px;top:470px" width="10" height="10" viewBox="0 0 10 10"><path d="M6.5 1.5 L3 5 L6.5 8.5" stroke="#4D6185" stroke-width="2" fill="none"/></svg>
<div class="sbb" style="left:160px;top:468px;width:177px;height:14px"></div>
<div class="a" style="left:244px;top:471px;width:1px;height:7px;background:#EEF4FE;"></div>
<div class="a" style="left:246px;top:471px;width:1px;height:7px;background:#EEF4FE;"></div>
<div class="a" style="left:248px;top:471px;width:1px;height:7px;background:#EEF4FE;"></div>
<div class="a" style="left:250px;top:471px;width:1px;height:7px;background:#EEF4FE;"></div>
<div class="sbb" style="left:872px;top:468px;width:15px;height:14px"></div>
<svg class="a" style="left:874px;top:470px" width="10" height="10" viewBox="0 0 10 10"><path d="M3.5 1.5 L7 5 L3.5 8.5" stroke="#4D6185" stroke-width="2" fill="none"/></svg>
<div class="a" style="left:327px;top:280px;width:245px;height:153px;background:#ECE9D8;border-radius:4px;border:1px solid #F4F2E8;border-right-color:#D8D4C4;border-bottom-color:#D8D4C4;"></div>
<div class="a gl" style="left:338px;top:281px;color:#EE9C72;background:transparent">Súčet</div>
<div class="a t" style="left:333px;top:295px;">Počet</div>
<div class="a t" style="left:333px;top:317px;">Skutočné náklady</div>
<div class="a t" style="left:333px;top:340px;">Normované náklady</div>
<div class="a t" style="left:333px;top:363px;">Rozdiel</div>
<div class="a t" style="left:333px;top:389px;">Réžia</div>
<div class="a" style="left:433px;top:291px;width:60px;height:21px;border:1px solid #7F9DB9;background:#ECE9D8;"></div>
<div class="a t" style="right:430px;top:297px;text-align:right;">20</div>
<div class="a" style="left:433px;top:313px;width:130px;height:21px;border:1px solid #7F9DB9;background:#ECE9D8;"></div>
<div class="a t" style="right:360px;top:319px;text-align:right;">61 503,7852</div>
<div class="a" style="left:433px;top:336px;width:130px;height:21px;border:1px solid #7F9DB9;background:#ECE9D8;"></div>
<div class="a t" style="right:360px;top:342px;text-align:right;">61 660,0000</div>
<div class="a" style="left:433px;top:359px;width:130px;height:21px;border:1px solid #7F9DB9;background:#ECE9D8;"></div>
<div class="a t" style="right:360px;top:365px;text-align:right;">156,2148</div>
<div class="a" style="left:433px;top:386px;width:130px;height:21px;border:1px solid #7F9DB9;background:#ECE9D8;"></div>
<div class="a t" style="right:360px;top:392px;text-align:right;">14 672,0000</div>
<div class="a t" style="left:518px;top:414px;font-size:12px;line-height:12px">Skryť</div>
<div class="a" style="left:138px;top:493px;width:772px;height:37px;border:1px solid #D0CFBF;border-radius:4px;"></div>
<div class="a gl" style="left:149px;top:491px;padding:0 2px;color:#EE9C72">Akcie</div>
<div class="a t" style="left:160px;top:509px;font-size:12px;line-height:12px">Ú<u>k</u>ony</div>
<div class="a" style="left:218px;top:505px;width:68px;height:19px;border:1px solid #1E3E6A;border-radius:3px;background:linear-gradient(#FFFFFF,#F4F4F0 40%,#ECEBE6 75%,#D8D4CA);"></div>
<div class="a t" style="left:218px;width:68px;top:509px;text-align:center;font-size:12px;line-height:12px">Výpočet</div>
<div class="a" style="left:831px;top:503px;width:68px;height:19px;border:1px solid #1E3E6A;border-radius:3px;background:linear-gradient(#FFFFFF,#F4F4F0 40%,#ECEBE6 75%,#D8D4CA);"></div>
<div class="a t" style="left:831px;width:68px;top:507px;text-align:center;font-size:12px;line-height:12px"><u>Z</u>atvoriť</div>
</div></body></html>
